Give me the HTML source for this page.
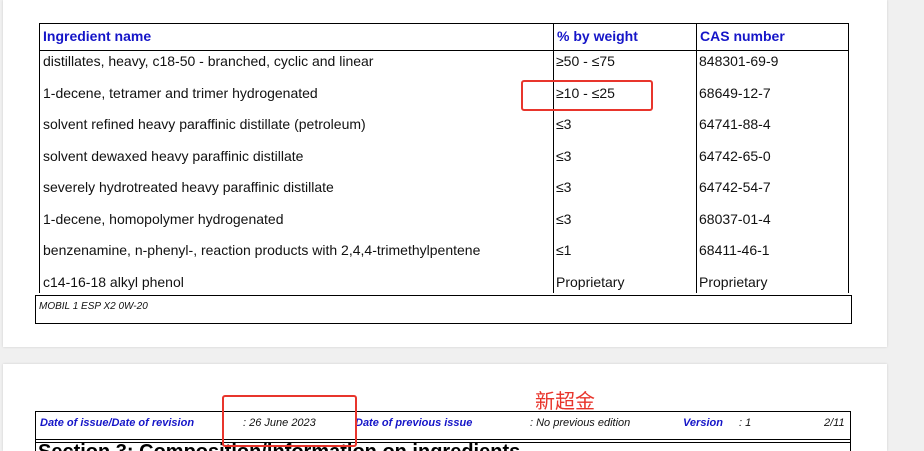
<!DOCTYPE html>
<html><head><meta charset="utf-8"><style>
html,body{margin:0;width:924px;height:451px;overflow:hidden;}
body{background:#f0f0f0;position:relative;font-family:"Liberation Sans",Arial,sans-serif;}
.pg{position:absolute;background:#fff;left:3px;width:884px;box-shadow:0 0 2px #ccc;}
.a{position:absolute;white-space:nowrap;}
.t{font-size:14px;color:#111;}
.h{font-size:14px;font-weight:bold;color:#1515c8;}
.ln{position:absolute;background:#000;}
.bi{font-size:11px;font-style:italic;font-weight:bold;color:#1515c8;}
.ii{font-size:11px;font-style:italic;color:#111;}
.red{position:absolute;border:2px solid #e8352c;border-radius:3px;}
</style></head><body>
<div class="pg" style="top:0;height:347px;"></div>
<div class="pg" style="top:364px;height:87px;"></div>

<div class="ln" style="left:39px;top:23px;width:810px;height:1px"></div>
<div class="ln" style="left:39px;top:50px;width:810px;height:1px"></div>
<div class="ln" style="left:39px;top:23px;width:1px;height:270px"></div>
<div class="ln" style="left:848px;top:23px;width:1px;height:270px"></div>
<div class="ln" style="left:553px;top:23px;width:1px;height:270px"></div>
<div class="ln" style="left:696px;top:23px;width:1px;height:270px"></div>

<div class="a h" style="left:43px;top:28px">Ingredient name</div>
<div class="a h" style="left:557px;top:28px">% by weight</div>
<div class="a h" style="left:700px;top:28px">CAS number</div>

<div class="a t" style="left:43px;top:53px">distillates, heavy, c18-50 - branched, cyclic and linear</div>
<div class="a t" style="left:556px;top:53px">≥50 - ≤75</div>
<div class="a t" style="left:699px;top:53px">848301-69-9</div>
<div class="a t" style="left:43px;top:85px">1-decene, tetramer and trimer hydrogenated</div>
<div class="a t" style="left:556px;top:85px">≥10 - ≤25</div>
<div class="a t" style="left:699px;top:85px">68649-12-7</div>
<div class="a t" style="left:43px;top:116px">solvent refined heavy paraffinic distillate (petroleum)</div>
<div class="a t" style="left:556px;top:116px">≤3</div>
<div class="a t" style="left:699px;top:116px">64741-88-4</div>
<div class="a t" style="left:43px;top:148px">solvent dewaxed heavy paraffinic distillate</div>
<div class="a t" style="left:556px;top:148px">≤3</div>
<div class="a t" style="left:699px;top:148px">64742-65-0</div>
<div class="a t" style="left:43px;top:179px">severely hydrotreated heavy paraffinic distillate</div>
<div class="a t" style="left:556px;top:179px">≤3</div>
<div class="a t" style="left:699px;top:179px">64742-54-7</div>
<div class="a t" style="left:43px;top:211px">1-decene, homopolymer hydrogenated</div>
<div class="a t" style="left:556px;top:211px">≤3</div>
<div class="a t" style="left:699px;top:211px">68037-01-4</div>
<div class="a t" style="left:43px;top:242px">benzenamine, n-phenyl-, reaction products with 2,4,4-trimethylpentene</div>
<div class="a t" style="left:556px;top:242px">≤1</div>
<div class="a t" style="left:699px;top:242px">68411-46-1</div>
<div class="a t" style="left:43px;top:274px">c14-16-18 alkyl phenol</div>
<div class="a t" style="left:556px;top:274px">Proprietary</div>
<div class="a t" style="left:699px;top:274px">Proprietary</div>

<div style="position:absolute;left:35px;top:295px;width:815px;height:27px;border:1px solid #000"></div>
<div class="a ii" style="left:39px;top:301px;font-size:10px">MOBIL 1 ESP X2 0W-20</div>

<div class="red" style="left:521px;top:80px;width:128px;height:27px"></div>

<div class="a" style="left:535px;top:385px;font-size:20px;color:#e8352c;font-family:'Noto Sans CJK SC',sans-serif">新超金</div>
<div class="ln" style="left:35px;top:411px;width:816px;height:1px"></div>
<div class="ln" style="left:35px;top:411px;width:1px;height:40px"></div>
<div class="ln" style="left:850px;top:411px;width:1px;height:40px"></div>
<div class="ln" style="left:35px;top:439px;width:816px;height:1px"></div>
<div class="ln" style="left:35px;top:442px;width:816px;height:1px"></div>
<div class="a bi" style="left:40px;top:417px">Date of issue/Date of revision</div>
<div class="a ii" style="left:243px;top:417px">: 26 June 2023</div>
<div class="a bi" style="left:355px;top:417px">Date of previous issue</div>
<div class="a ii" style="left:530px;top:417px">: No previous edition</div>
<div class="a bi" style="left:683px;top:417px">Version</div>
<div class="a ii" style="left:739px;top:417px">: 1</div>
<div class="a ii" style="left:824px;top:417px">2/11</div>
<div class="a" style="left:38px;top:441px;font-size:20px;font-weight:bold;color:#000">Section 3: Composition/information on ingredients</div>
<div class="red" style="left:222px;top:395px;width:131px;height:48px"></div>
</body></html>
